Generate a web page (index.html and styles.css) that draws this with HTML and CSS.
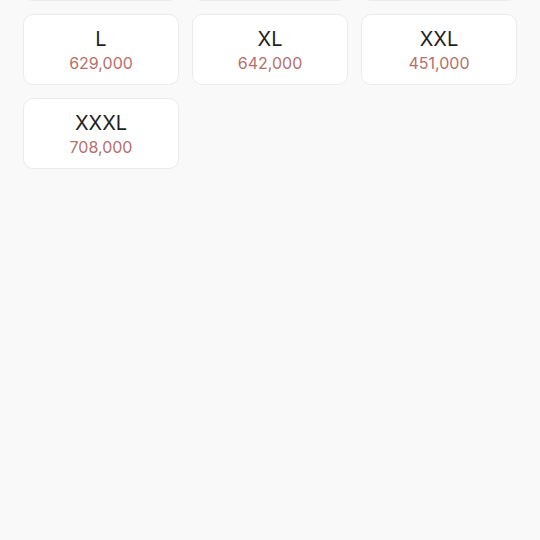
FILE: index.html
```html
<!DOCTYPE html>
<html lang="en">
<head>
<meta charset="utf-8">
<title>Sizes</title>
<link rel="stylesheet" href="styles.css">
</head>
<body>
<main class="page">
  <div class="grid">
    <div class="card"><div class="size">XS</div><div class="price">599,000</div></div>
    <div class="card"><div class="size">S</div><div class="price">609,000</div></div>
    <div class="card"><div class="size">M</div><div class="price">619,000</div></div>
    <div class="card"><div class="size">L</div><div class="price">629,000</div></div>
    <div class="card"><div class="size">XL</div><div class="price">642,000</div></div>
    <div class="card"><div class="size">XXL</div><div class="price">451,000</div></div>
    <div class="card"><div class="size">XXXL</div><div class="price">708,000</div></div>
  </div>
</main>
</body>
</html>
```
FILE: styles.css
```css
html, body {
  margin: 0;
  padding: 0;
  background: #f9f9f9;
  font-family: Inter, "Noto Sans", sans-serif;
}
.page {
  width: 540px;
  height: 540px;
  overflow: hidden;
}
.grid {
  display: grid;
  grid-template-columns: repeat(3, 156px);
  gap: 13px;
  padding: 0 23px;
  margin-top: -70px;
}
.card {
  height: 71px;
  box-sizing: border-box;
  background: #ffffff;
  border: 1px solid #ebebeb;
  border-radius: 10px;
  display: flex;
  flex-direction: column;
  align-items: center;
  justify-content: center;
  gap: 2px;
}
.size {
  font-size: 20px;
  line-height: 24px;
  color: #1f1f1f;
}
.price {
  font-size: 16px;
  line-height: 20px;
  color: #b4706b;
}
```
